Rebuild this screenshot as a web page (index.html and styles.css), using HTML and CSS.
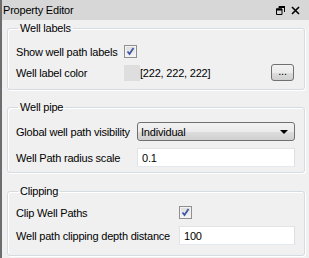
FILE: index.html
```html
<!DOCTYPE html>
<html>
<head>
<meta charset="utf-8">
<link rel="stylesheet" href="styles.css">
</head>
<body>
<div class="dock">
  <div class="titlebar">
    <span class="title">Property Editor</span>
    <div class="tb-buttons">
      <svg class="tb-icon" width="9" height="9" viewBox="0 0 9 9">
        <path d="M3 0.5h5.5v5.5M3 0.5v2M0.5 3h5.5v5.5h-5.5z" fill="none" stroke="#000" stroke-width="1"/>
        <rect x="3" y="0" width="6" height="2" fill="#000"/>
        <rect x="0" y="2.5" width="6" height="2" fill="#000"/>
      </svg>
      <svg class="tb-icon" width="9" height="9" viewBox="0 0 9 9">
        <path d="M1 1L8 8M8 1L1 8" stroke="#000" stroke-width="1.6"/>
      </svg>
    </div>
  </div>
  <div class="content">
    <fieldset class="group g1">
      <legend>Well labels</legend>
      <div class="form">
        <span class="label">Show well path labels</span>
        <div class="field"><span class="check"><svg width="11" height="11" viewBox="0 0 11 11"><path d="M2.5 5.5L4.5 8L8.5 2" fill="none" stroke="#3f57a8" stroke-width="1.8"/></svg></span></div>
        <span class="label">Well label color</span>
        <div class="field color-field">
          <span class="swatch"></span>
          <span class="color-text">[222, 222, 222]</span>
          <span class="btn">...</span>
        </div>
      </div>
    </fieldset>
    <fieldset class="group g2">
      <legend>Well pipe</legend>
      <div class="form">
        <span class="label">Global well path visibility</span>
        <div class="field"><div class="combo"><span>Individual</span><span class="arrow"></span></div></div>
        <span class="label">Well Path radius scale</span>
        <div class="field"><div class="edit">0.1</div></div>
      </div>
    </fieldset>
    <fieldset class="group g3">
      <legend>Clipping</legend>
      <div class="form">
        <span class="label">Clip Well Paths</span>
        <div class="field"><span class="check"><svg width="11" height="11" viewBox="0 0 11 11"><path d="M2.5 5.5L4.5 8L8.5 2" fill="none" stroke="#3f57a8" stroke-width="1.8"/></svg></span></div>
        <span class="label">Well path clipping depth distance</span>
        <div class="field"><div class="edit">100</div></div>
      </div>
    </fieldset>
  </div>
</div>
</body>
</html>
```
FILE: styles.css
```css
html, body {
  margin: 0;
  padding: 0;
  background: #f0f0f0;
}
body {
  width: 309px;
  height: 258px;
  overflow: hidden;
  font-family: "Liberation Sans", Arial, sans-serif;
  font-size: 11px;
  letter-spacing: -0.2px;
  color: #000;
}
.dock {
  height: 258px;
  border-left: 2px solid #6d6d6d;
  box-sizing: border-box;
  display: flex;
  flex-direction: column;
}
.titlebar {
  height: 20px;
  background: #d7d7d7;
  display: flex;
  align-items: center;
  justify-content: space-between;
  padding: 0 9px 0 1px;
  flex: none;
}
.tb-buttons {
  display: flex;
  gap: 6px;
  align-items: center;
}
.content {
  padding: 2px 4px 0 5px;
  display: flex;
  flex-direction: column;
}
.group {
  margin: 0;
  border: 1px solid #d5dbe0;
  border-radius: 3px;
  box-shadow: inset 1px 1px 0 #fff, 1px 1px 0 #fff;
  padding: 0 9px 0 8px;
  min-width: 0;
}
.group legend {
  padding: 0 2px;
  margin-left: 2px;
  line-height: 13px;
  height: 13px;
}
.g1 { padding-top: 8px; padding-bottom: 8px; }
.g2 { margin-top: 11px; padding-top: 8px; padding-bottom: 5px; }
.g3 { margin-top: 12px; padding-top: 5px; padding-bottom: 10px; }
.form {
  display: grid;
  align-items: center;
}
.g1 .form { grid-template-columns: 108px 1fr; row-gap: 4px; }
.g2 .form { grid-template-columns: 121px 1fr; row-gap: 7px; }
.g3 .form { grid-template-columns: 163px 1fr; row-gap: 4px; }
.label {
  white-space: nowrap;
}
.field {
  display: flex;
  align-items: center;
  height: 17px;
}
.g2 .field, .g3 .field { height: 19px; }
.check {
  width: 11px;
  height: 11px;
  border: 1px solid #8e8f8f;
  background: linear-gradient(#dcdcdc, #f6f6f6);
  display: flex;
  align-items: center;
  justify-content: center;
  box-shadow: inset 0 0 0 1px #f4f4f4;
}
.swatch {
  width: 16px;
  height: 16px;
  background: #dedede;
}
.color-text {
  flex: 1;
}
.btn {
  width: 21px;
  height: 15px;
  border: 1px solid #707070;
  border-radius: 3px;
  background: linear-gradient(#f2f2f2 0%, #ebebeb 50%, #dddddd 51%, #cfcfcf 100%);
  line-height: 13px;
  text-align: center;
  margin-right: 1px;
}
.combo {
  flex: 1;
  height: 17px;
  border: 1px solid #707070;
  border-radius: 3px;
  background: linear-gradient(#f2f2f2 0%, #ebebeb 50%, #dddddd 51%, #cfcfcf 100%);
  display: flex;
  align-items: center;
  justify-content: space-between;
  padding: 0 6px 0 3px;
}
.arrow {
  width: 0;
  height: 0;
  border-left: 4px solid transparent;
  border-right: 4px solid transparent;
  border-top: 4px solid #000;
}
.edit {
  flex: 1;
  height: 17px;
  border: 1px solid #abadb3;
  border-top-color: #e3e3e3;
  border-left-color: #e2e3ea;
  border-right-color: #dbdfe6;
  border-bottom-color: #e3e9ef;
  background: #fff;
  padding-left: 4px;
  line-height: 18px;
}
```
